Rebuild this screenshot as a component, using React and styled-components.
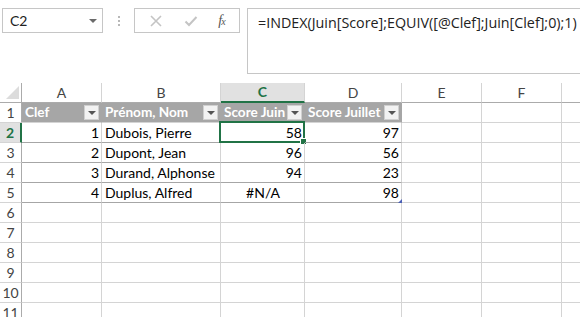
import React from 'react'
import styled, { createGlobalStyle, css } from 'styled-components'

const Global = createGlobalStyle`
  html, body { margin: 0; padding: 0; background: #fff; overflow: hidden; }
  body { font-family: Lato, "Liberation Sans", sans-serif; }
`

const GREEN = '#217346'
const GRID = '#d4d4d4'
const COLS = [22, 80, 119, 84, 97, 80, 80, 80]
const LETTERS = ['A', 'B', 'C', 'D', 'E', 'F', '']

const Page = styled.div`
  width: 580px;
  height: 317px;
  overflow: hidden;
`

const TopBar = styled.div`
  display: flex;
  align-items: flex-start;
  padding: 8px 0 10px 2px;
  height: 65px;
`

const NameBox = styled.div`
  box-sizing: border-box;
  width: 101px;
  height: 25px;
  border: 1px solid #c6c6c6;
  display: flex;
  align-items: center;
  justify-content: space-between;
  padding: 0 5px 0 7px;
  font-size: 14px;
  color: #222;
`

const Caret = styled.span`
  width: 0;
  height: 0;
  border-left: 4px solid transparent;
  border-right: 4px solid transparent;
  border-top: 4px solid #6a6a6a;
`

const Grip = styled.div`
  width: 31px;
  height: 25px;
  display: flex;
  flex-direction: column;
  align-items: center;
  justify-content: center;
  gap: 2px;
  span {
    width: 2px;
    height: 2px;
    background: #b8b8b8;
  }
`

const FxButtons = styled.div`
  box-sizing: border-box;
  width: 106px;
  height: 25px;
  border: 1px solid #c6c6c6;
  display: flex;
  align-items: center;
  justify-content: space-around;
  padding: 0 4px;
  margin-right: 7px;
`

const Fx = styled.span`
  font-family: "Liberation Serif", serif;
  font-style: italic;
  font-size: 14px;
  color: #555;
  letter-spacing: -1px;
  sub { font-size: 10px; vertical-align: baseline; }
`

const FormulaBox = styled.div`
  box-sizing: border-box;
  flex: 1;
  height: 66px;
  border: 1px solid #c6c6c6;
  border-right: none;
  padding: 4px 0 0 10px;
  font-family: "Open Sans", sans-serif;
  font-size: 14.3px;
  color: #222;
  white-space: nowrap;
`

const Sheet = styled.div`
  display: grid;
  grid-template-columns: ${COLS.map(c => c + 'px').join(' ')};
  grid-auto-rows: 20px;
`

const Cell = styled.div`
  position: relative;
  box-sizing: border-box;
  border-right: 1px solid ${GRID};
  border-bottom: 1px solid ${GRID};
  font-size: 14px;
  color: #000;
  line-height: 19px;
  padding: 0 2px 0 3px;
  white-space: nowrap;
  overflow: visible;
  text-align: ${p => p.$align || 'left'};
  ${p => p.$tableRow && css`border-bottom-color: #a6a6a6;`}
`

const ColHead = styled.div`
  box-sizing: border-box;
  border-right: 1px solid ${GRID};
  border-bottom: 1px solid #ababab;
  text-align: center;
  font-size: 14px;
  line-height: 19px;
  color: #444;
  background: #fff;
  ${p => p.$active && css`
    background: #e1e1e1;
    color: ${GREEN};
    font-weight: bold;
    border-bottom: 2px solid ${GREEN};
    line-height: 18px;
  `}
`

const Corner = styled.div`
  box-sizing: border-box;
  border-right: 1px solid #ababab;
  border-bottom: 1px solid #ababab;
  display: flex;
  align-items: flex-end;
  justify-content: flex-end;
  padding: 0 2px 3px 0;
  span {
    width: 0;
    height: 0;
    border-left: 13px solid transparent;
    border-bottom: 13px solid #dcdcdc;
  }
`

const RowHead = styled.div`
  box-sizing: border-box;
  border-right: 1px solid #ababab;
  border-bottom: 1px solid ${GRID};
  font-size: 14px;
  line-height: 19px;
  text-align: center;
  color: #444;
  ${p => p.$active && css`
    background: #e1e1e1;
    color: ${GREEN};
    font-weight: bold;
    border-right: 2px solid ${GREEN};
  `}
`

const TableHead = styled.div`
  box-sizing: border-box;
  background: #a6a6a6;
  border-right: 1px solid #a6a6a6;
  border-bottom: 1px solid ${GRID};
  color: #fff;
  font-weight: bold;
  font-size: 13.6px;
  line-height: 19px;
  padding: 0 2px 0 3px;
  display: flex;
  align-items: center;
  justify-content: space-between;
  white-space: nowrap;
`

const Filter = styled.span`
  box-sizing: border-box;
  flex: none;
  width: 15px;
  height: 15px;
  background: #f2f2f2;
  border: 1px solid #d0d0d0;
  display: flex;
  align-items: center;
  justify-content: center;
  &::after {
    content: '';
    border-left: 4px solid transparent;
    border-right: 4px solid transparent;
    border-top: 4px solid #555;
  }
`

const Selection = styled.div`
  position: absolute;
  left: -2px;
  top: -2px;
  right: -1px;
  bottom: -1px;
  border: 2px solid ${GREEN};
  pointer-events: none;
  &::after {
    content: '';
    position: absolute;
    right: -4px;
    bottom: -4px;
    width: 5px;
    height: 5px;
    background: ${GREEN};
    border: 1px solid #fff;
  }
`

const ResizeMark = styled.span`
  position: absolute;
  right: -1px;
  bottom: -1px;
  width: 0;
  height: 0;
  border-left: 4px solid transparent;
  border-bottom: 4px solid #4a5fb5;
`

const data = [
  [1, 'Dubois, Pierre', 58, 97],
  [2, 'Dupont, Jean', 96, 56],
  [3, 'Durand, Alphonse', 94, 23],
  [4, 'Duplus, Alfred', '#N/A', 98],
]

const headers = ['Clef', 'Prénom, Nom', 'Score Juin', 'Score Juillet']

function Row({ n }) {
  const cells = []
  if (n === 1) {
    headers.forEach(h => cells.push(
      <TableHead key={h}>{h}<Filter /></TableHead>
    ))
  } else if (n <= 5) {
    const [k, name, juin, juil] = data[n - 2]
    cells.push(<Cell key="a" $align="right" $tableRow>{k}</Cell>)
    cells.push(<Cell key="b" $tableRow>{name}</Cell>)
    cells.push(
      <Cell key="c" $align={juin === '#N/A' ? 'center' : 'right'} $tableRow>
        {juin}
        {n === 2 && <Selection />}
      </Cell>
    )
    cells.push(
      <Cell key="d" $align="right" $tableRow>
        {juil}
        {n === 5 && <ResizeMark />}
      </Cell>
    )
  } else {
    for (let i = 0; i < 4; i++) cells.push(<Cell key={i} />)
  }
  for (let i = 4; i < 7; i++) cells.push(<Cell key={'x' + i} />)
  return (
    <>
      <RowHead $active={n === 2}>{n}</RowHead>
      {cells}
    </>
  )
}

export default function App() {
  return (
    <Page>
      <Global />
      <TopBar>
        <NameBox>C2<Caret /></NameBox>
        <Grip><span /><span /><span /></Grip>
        <FxButtons>
          <svg width="14" height="14" viewBox="0 0 14 14">
            <path d="M2 2 L12 12 M12 2 L2 12" stroke="#c4c4c4" strokeWidth="1.6" fill="none" />
          </svg>
          <svg width="14" height="14" viewBox="0 0 14 14">
            <path d="M1.5 7.5 L5 11 L12.5 3" stroke="#c4c4c4" strokeWidth="2" fill="none" />
          </svg>
          <Fx>f<sub>x</sub></Fx>
        </FxButtons>
        <FormulaBox>=INDEX(Juin[Score];EQUIV([@Clef];Juin[Clef];0);1)</FormulaBox>
      </TopBar>
      <Sheet>
        <Corner><span /></Corner>
        {LETTERS.map((l, i) => <ColHead key={i} $active={l === 'C'}>{l}</ColHead>)}
        {Array.from({ length: 11 }, (_, i) => <Row key={i} n={i + 1} />)}
      </Sheet>
    </Page>
  )
}
